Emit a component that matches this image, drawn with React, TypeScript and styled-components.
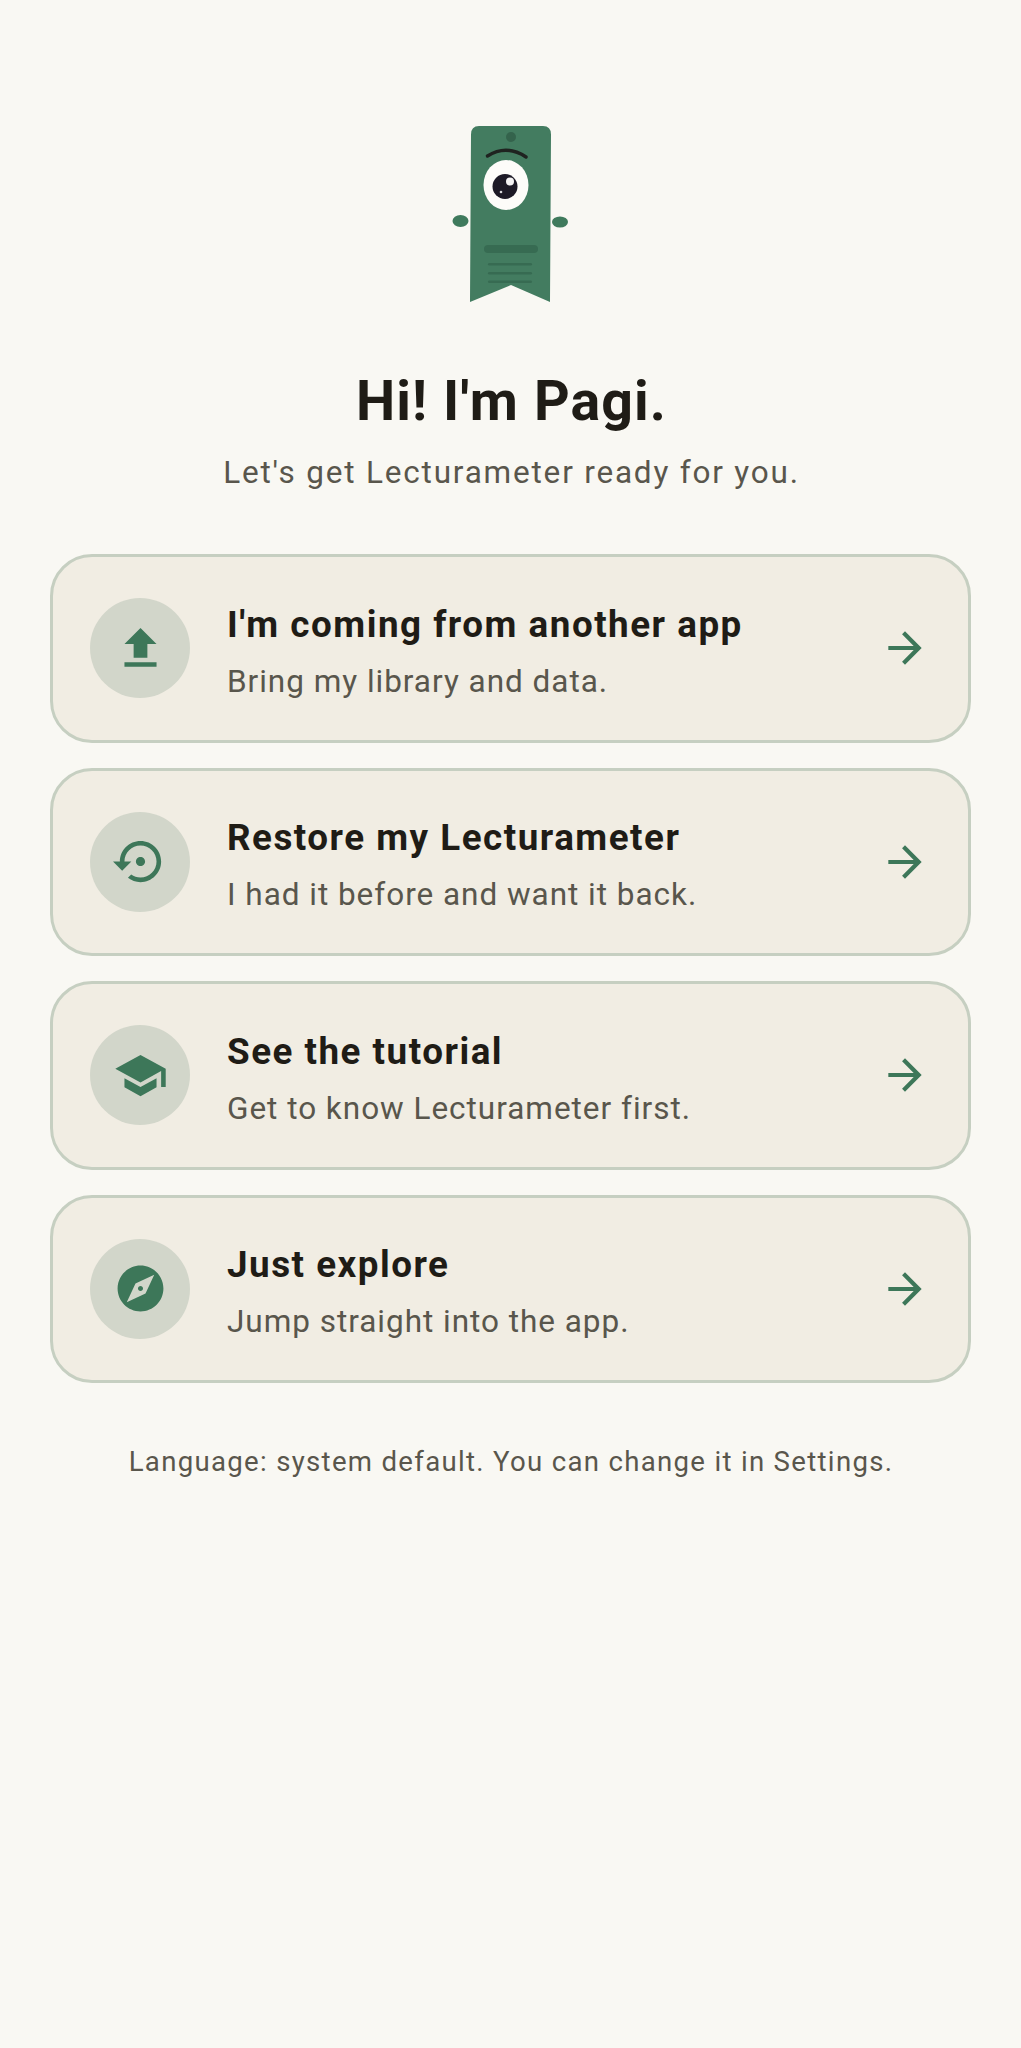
import styled, { createGlobalStyle } from "styled-components";

const GlobalStyle = createGlobalStyle`
  html, body {
    margin: 0;
    padding: 0;
    background: #f9f8f3;
  }
  * {
    box-sizing: border-box;
  }
`;

const Page = styled.div`
  width: 1021px;
  height: 2048px;
  padding: 120px 50px 0;
  display: flex;
  flex-direction: column;
  align-items: center;
  background: #f9f8f3;
  font-family: Roboto, "Liberation Sans", sans-serif;
`;

const Mascot = styled.svg`
  display: block;
  width: 124px;
  height: 186px;
  flex: none;
  margin-left: -2px;
`;

const Title = styled.h1`
  margin: 58px 0 0 2px;
  font-size: 55.5px;
  line-height: 76px;
  font-weight: 700;
  letter-spacing: 1.1px;
  color: #1f1c16;
`;

const Subtitle = styled.p`
  margin: 12px 0 0 2px;
  font-size: 31.5px;
  line-height: 42px;
  letter-spacing: 1.8px;
  font-weight: 400;
  color: #59564c;
`;

const CardList = styled.div`
  width: 921px;
  margin-top: 60px;
  display: flex;
  flex-direction: column;
  gap: 25px;
`;

const Card = styled.div`
  height: 188.5px;
  padding: 0 38px 0 37px;
  display: flex;
  align-items: center;
  background: #f1ede3;
  border: 3px solid #c6cfc1;
  border-radius: 42px;
`;

const IconCircle = styled.div`
  width: 100px;
  height: 100px;
  flex: none;
  display: flex;
  align-items: center;
  justify-content: center;
  border-radius: 50%;
  background: #d2d6ca;
`;

const CardText = styled.div`
  flex: 1;
  margin-left: 37px;
  padding-top: 5px;
  display: flex;
  flex-direction: column;
`;

const CardTitle = styled.div`
  font-size: 36.8px;
  line-height: 52px;
  font-weight: 700;
  letter-spacing: 1.5px;
  color: #1f1c16;
`;

const CardSub = styled.div`
  margin-top: 10.3px;
  font-size: 31.5px;
  line-height: 42px;
  letter-spacing: 0.97px;
  color: #59564c;
`;

const Footnote = styled.p`
  margin: 59px 0 0 1px;
  font-size: 27.6px;
  line-height: 40px;
  letter-spacing: 1.3px;
  color: #59564c;
`;

const GlyphSvg = styled.svg<{ $size: number }>`
  display: block;
  flex: none;
  width: ${(p) => p.$size}px;
  height: ${(p) => p.$size}px;
  fill: #3d7759;
`;

const icons = {
  upload: "M9 16h6v-6h4l-7-7-7 7h4v6zm-4 2h14v2H5v-2z",
  restore:
    "M14 12c0-1.1-.9-2-2-2s-2 .9-2 2 .9 2 2 2 2-.9 2-2zm-2-9c-4.97 0-9 4.03-9 9H0l4 4 4-4H5c0-3.87 3.13-7 7-7s7 3.13 7 7-3.13 7-7 7c-1.51 0-2.91-.49-4.06-1.3l-1.42 1.44C8.04 20.3 9.94 21 12 21c4.97 0 9-4.03 9-9s-4.03-9-9-9z",
  school:
    "M5 13.18v4L12 21l7-3.82v-4L12 17l-7-3.82zM12 3L1 9l11 6 9-4.91V17h2V9L12 3z",
  explore:
    "M12 10.9c-.61 0-1.1.49-1.1 1.1s.49 1.1 1.1 1.1c.61 0 1.1-.49 1.1-1.1s-.49-1.1-1.1-1.1zM12 2C6.48 2 2 6.48 2 12s4.48 10 10 10 10-4.48 10-10S17.52 2 12 2zm2.19 12.19L6 18l3.81-8.19L18 6l-3.81 8.19z",
  arrow: "M12 4l-1.41 1.41L16.17 11H4v2h12.17l-5.58 5.59L12 20l8-8z",
};

function Glyph({ name, size }: { name: keyof typeof icons; size: number }) {
  return (
    <GlyphSvg $size={size} viewBox="0 0 24 24">
      <path d={icons[name]} />
    </GlyphSvg>
  );
}

const options: { icon: keyof typeof icons; title: string; sub: string }[] = [
  { icon: "upload", title: "I'm coming from another app", sub: "Bring my library and data." },
  { icon: "restore", title: "Restore my Lecturameter", sub: "I had it before and want it back." },
  { icon: "school", title: "See the tutorial", sub: "Get to know Lecturameter first." },
  { icon: "explore", title: "Just explore", sub: "Jump straight into the app." },
];

function PagiMascot() {
  return (
    <Mascot viewBox="448 120 124 186">
      <ellipse cx="460.5" cy="221" rx="8" ry="6" fill="#3f7a5c" />
      <ellipse cx="560" cy="222" rx="8" ry="5.5" fill="#3f7a5c" />
      <path
        d="M479 126h64q8 0 8 8.500L550 302l-39-17-41 17 1-167.500q0-8.500 8-8.500z"
        fill="#437c60"
      />
      <circle cx="511" cy="137" r="5" fill="#34634c" />
      <path d="M487.500 156q19-12 38.500 1" fill="none" stroke="#1f2320" strokeWidth="3.400" strokeLinecap="round" />
      <ellipse cx="506" cy="185" rx="22.500" ry="25" fill="#fdfcf9" />
      <circle cx="505" cy="186.500" r="12.500" fill="#1d1a26" />
      <circle cx="510" cy="181.500" r="4" fill="#f4f3f3" />
      <circle cx="501" cy="192" r="1.300" fill="#d8d7da" />
      <rect x="484" y="245" width="54" height="8" rx="4" fill="#376b52" />
      <rect x="488" y="263" width="44" height="2.500" rx="1.200" fill="#376b52" />
      <rect x="488" y="272" width="44" height="2.500" rx="1.200" fill="#376b52" />
      <rect x="488" y="280.500" width="44" height="2.500" rx="1.200" fill="#376b52" />
    </Mascot>
  );
}

export default function App() {
  return (
    <Page>
      <GlobalStyle />
      <PagiMascot />
      <Title>Hi! I'm Pagi.</Title>
      <Subtitle>Let's get Lecturameter ready for you.</Subtitle>
      <CardList>
        {options.map((o) => (
          <Card key={o.title}>
            <IconCircle>
              <Glyph name={o.icon} size={55} />
            </IconCircle>
            <CardText>
              <CardTitle>{o.title}</CardTitle>
              <CardSub>{o.sub}</CardSub>
            </CardText>
            <Glyph name="arrow" size={50} />
          </Card>
        ))}
      </CardList>
      <Footnote>Language: system default. You can change it in Settings.</Footnote>
    </Page>
  );
}
